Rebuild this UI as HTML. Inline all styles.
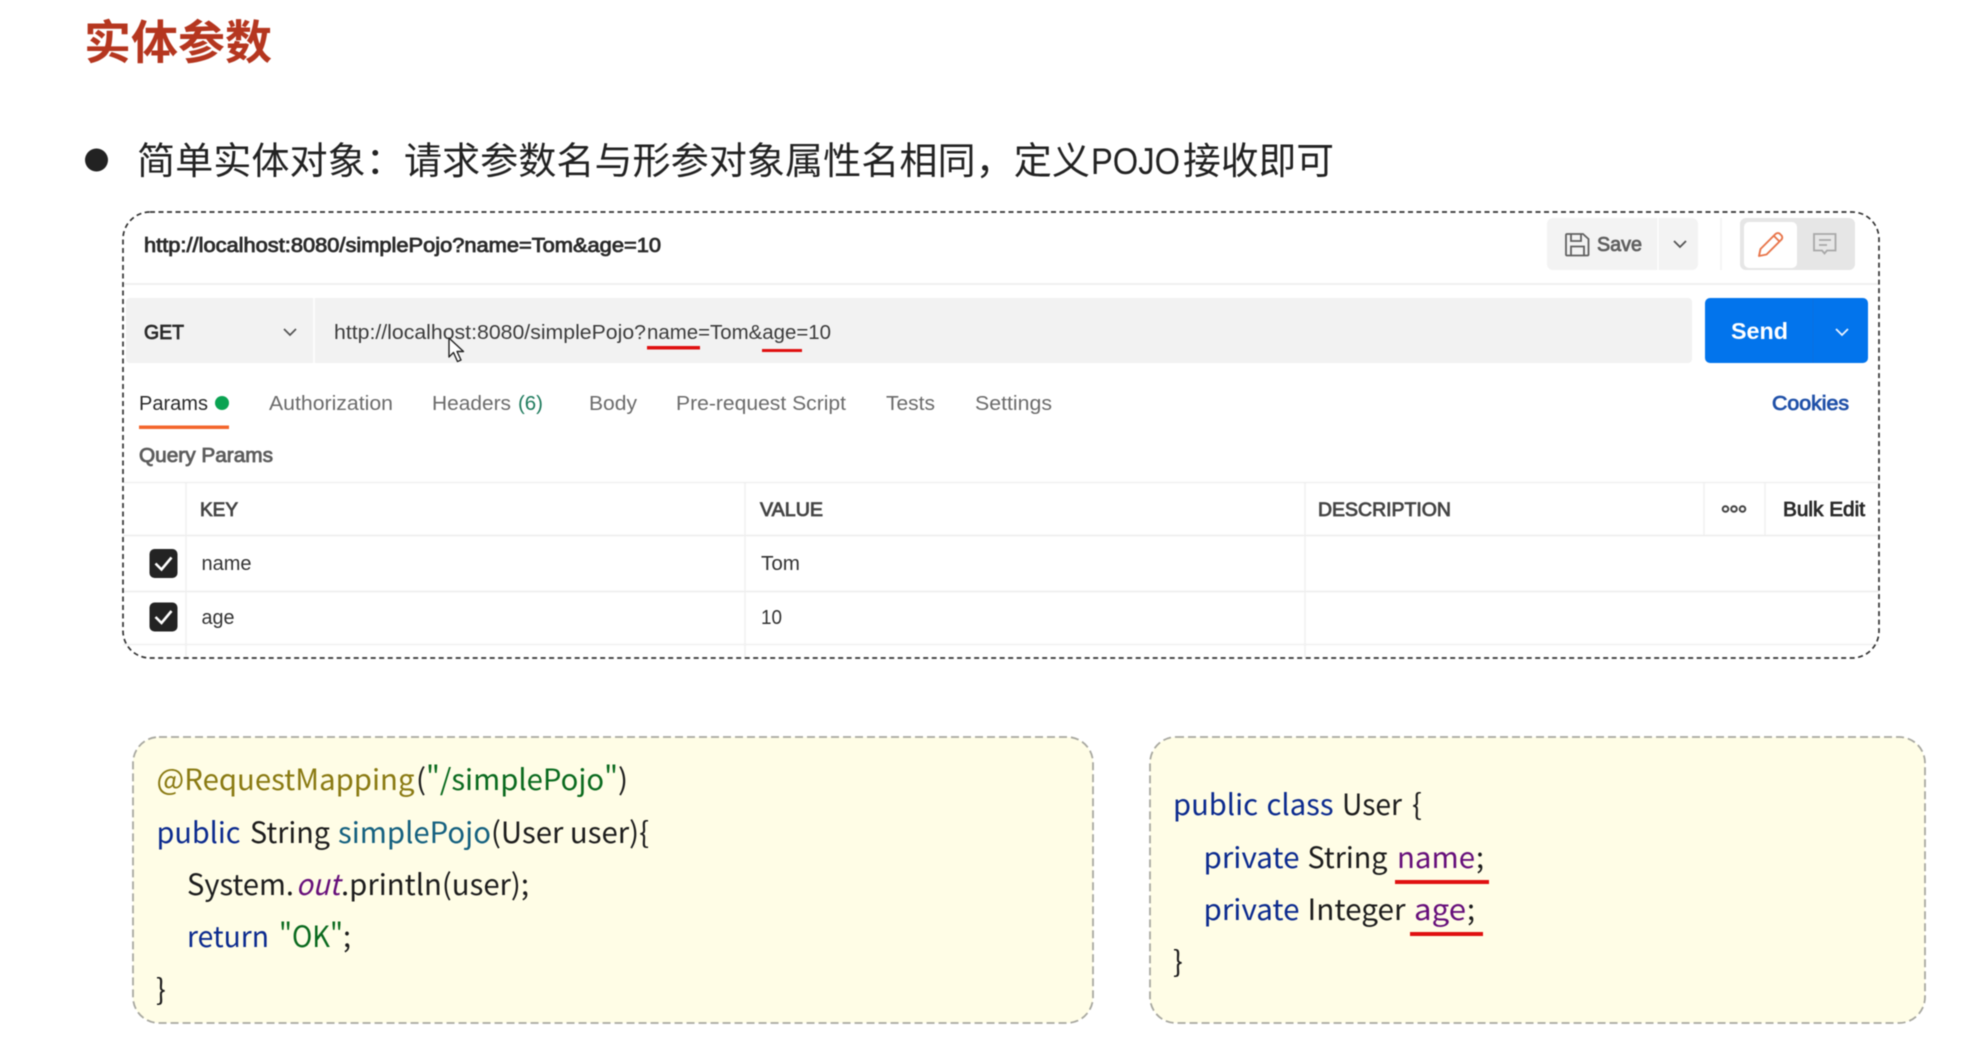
<!DOCTYPE html>
<html lang="zh">
<head>
<meta charset="utf-8">
<title>实体参数</title>
<style>
html,body{margin:0;padding:0;background:#fff;width:1982px;height:1051px;overflow:hidden}
svg{display:block;filter:blur(.55px)}
.ui{font-family:"Liberation Sans",sans-serif;font-size:20px;fill:#6b6b6b}
.dk{fill:#2a2a2a}
.med{stroke-width:.8px;paint-order:stroke}
.hd{fill:#444;stroke:#444;font-size:19px}
.cjk{font-family:"Liberation Sans","Noto Sans CJK SC",sans-serif}
.code{font-family:"Noto Sans CJK SC","Liberation Sans",sans-serif;font-size:29px;fill:#1c1c1c}
.k{fill:#0b2a8e}.p{fill:#660e7a}.g{fill:#0a6a1e}.a{fill:#8a7a12}.m{fill:#14607f}
</style>
</head>
<body>
<svg width="1982" height="1051" viewBox="0 0 1982 1051" xmlns="http://www.w3.org/2000/svg">
<rect width="1982" height="1051" fill="#fff"/>

<!-- heading -->
<text class="cjk" x="84" y="59" font-size="46.5" font-weight="bold" fill="#b5361f" textLength="188" lengthAdjust="spacingAndGlyphs">实体参数</text>
<circle cx="96.500" cy="160" r="11.500" fill="#222"/>
<text class="cjk" x="137" y="174" font-size="37.5" fill="#222" textLength="953" lengthAdjust="spacingAndGlyphs">简单实体对象：请求参数名与形参对象属性名相同，定义</text>
<text class="cjk" x="1091" y="174" font-size="37.5" fill="#222" textLength="89" lengthAdjust="spacingAndGlyphs">POJO</text>
<text class="cjk" x="1183" y="174" font-size="37.5" fill="#222" textLength="151" lengthAdjust="spacingAndGlyphs">接收即可</text>

<!-- postman panel -->
<line x1="123" y1="284" x2="1879" y2="284" stroke="#f0f0f0" stroke-width="2"/>
<text class="ui dk med" stroke="#2a2a2a" x="144" y="252" textLength="517" lengthAdjust="spacingAndGlyphs">http://localhost:8080/simplePojo?name=Tom&amp;age=10</text>

<!-- save -->
<rect x="1547" y="218" width="151" height="52" rx="6" fill="#f3f3f3"/>
<line x1="1658" y1="218" x2="1658" y2="270" stroke="#fff" stroke-width="1.5"/>
<path d="M1567 234h16l5.500 5v15.500q0 1-1 1h-20.500q-1 0-1-1v-19.500q0-1 1-1zM1571 234v7h10v-7M1571 255.500v-9h13v9" fill="none" stroke="#606060" stroke-width="1.800"/>
<text class="ui med" stroke="#5f5f5f" x="1597" y="251" textLength="45" lengthAdjust="spacingAndGlyphs" style="fill:#5f5f5f">Save</text>
<path d="M1674 241l6 6 6-6" fill="none" stroke="#555" stroke-width="1.800"/>
<line x1="1721" y1="218" x2="1721" y2="270" stroke="#f2f2f2" stroke-width="1.500"/>
<rect x="1740" y="218" width="115" height="52" rx="6" fill="#e6e6e6"/>
<rect x="1744" y="222" width="53" height="46" rx="5" fill="#fff"/>
<path d="M1759 256l1.500-7 15-15q2-1.500 4-.5l2 2q1.500 2 0 4l-15 15zM1774 236l6 6" fill="none" stroke="#e8754a" stroke-width="1.900" stroke-linejoin="round"/>
<path d="M1814 234h21.500v16.500h-8.500l-2.500 3-2.500-3h-8zM1819 240h12M1819 245h8" fill="none" stroke="#a8a8a8" stroke-width="1.800"/>

<!-- url bar -->
<rect x="126" y="298" width="1566" height="65" rx="4" fill="#f2f2f2"/>
<line x1="314" y1="298" x2="314" y2="363" stroke="#fff" stroke-width="1.500"/>
<text class="ui dk med" stroke="#2a2a2a" x="144" y="339" textLength="40" lengthAdjust="spacingAndGlyphs">GET</text>
<path d="M284 329l6 6 6-6" fill="none" stroke="#555" stroke-width="1.700"/>
<text class="ui" x="334" y="339" style="fill:#3c3c3c" textLength="312" lengthAdjust="spacingAndGlyphs">http://localhost:8080/simplePojo?</text>
<text class="ui" x="647" y="339" style="fill:#3c3c3c" textLength="184" lengthAdjust="spacingAndGlyphs">name=Tom&amp;age=10</text>
<rect x="647" y="346" width="53" height="3.500" fill="#e01010"/>
<rect x="762" y="349" width="40" height="3" fill="#e01010"/>
<path d="M449 338v19l4.500-4.500 4 9 3.500-1.500-4-8.500h6.500z" fill="#fff" stroke="#222" stroke-width="1.400" stroke-linejoin="round"/>

<!-- send -->
<rect x="1705" y="298" width="163" height="65" rx="5" fill="#0274ec"/>
<line x1="1813" y1="298" x2="1813" y2="363" stroke="#0a6fdf" stroke-width="1"/>
<text class="ui" x="1731" y="339" font-weight="bold" style="fill:#fff;font-size:23px" textLength="57" lengthAdjust="spacingAndGlyphs">Send</text>
<path d="M1836 329l6 6 6-6" fill="none" stroke="#e8f2ff" stroke-width="1.800"/>

<!-- tabs -->
<text class="ui dk" x="139" y="410" textLength="69" lengthAdjust="spacingAndGlyphs">Params</text>
<circle cx="222" cy="403" r="7" fill="#0aa352"/>
<rect x="139" y="425.500" width="90" height="3.500" fill="#f3662c"/>
<text class="ui" x="269" y="410" textLength="124" lengthAdjust="spacingAndGlyphs">Authorization</text>
<text class="ui" x="432" y="410" textLength="79" lengthAdjust="spacingAndGlyphs">Headers</text>
<text class="ui" x="518" y="410" style="fill:#1d7a5c" textLength="25" lengthAdjust="spacingAndGlyphs">(6)</text>
<text class="ui" x="589" y="410" textLength="48" lengthAdjust="spacingAndGlyphs">Body</text>
<text class="ui" x="676" y="410" textLength="170" lengthAdjust="spacingAndGlyphs">Pre-request Script</text>
<text class="ui" x="886" y="410" textLength="49" lengthAdjust="spacingAndGlyphs">Tests</text>
<text class="ui" x="975" y="410" textLength="77" lengthAdjust="spacingAndGlyphs">Settings</text>
<text class="ui med" stroke="#1f50a8" x="1772" y="410" style="fill:#1f50a8" textLength="77" lengthAdjust="spacingAndGlyphs">Cookies</text>
<text class="ui med" stroke="#5c5c5c" x="139" y="462" style="fill:#5c5c5c" textLength="134" lengthAdjust="spacingAndGlyphs">Query Params</text>

<!-- table -->
<g stroke="#f0f0f0" stroke-width="1.500">
<line x1="123" y1="482.500" x2="1879" y2="482.500"/>
<line x1="123" y1="535.500" x2="1879" y2="535.500" stroke="#ededed"/>
<line x1="123" y1="591.500" x2="1879" y2="591.500" stroke="#ededed"/>
<line x1="123" y1="644.500" x2="1879" y2="644.500"/>
<line x1="186" y1="482" x2="186" y2="658"/>
<line x1="745" y1="482" x2="745" y2="658"/>
<line x1="1305" y1="482" x2="1305" y2="658"/>
<line x1="1704" y1="482" x2="1704" y2="535"/>
<line x1="1765" y1="482" x2="1765" y2="535"/>
</g>
<text class="ui hd med" x="200" y="516" textLength="38" lengthAdjust="spacingAndGlyphs">KEY</text>
<text class="ui hd med" x="760" y="516" textLength="63" lengthAdjust="spacingAndGlyphs">VALUE</text>
<text class="ui hd med" x="1318" y="516" textLength="133" lengthAdjust="spacingAndGlyphs">DESCRIPTION</text>
<g fill="none" stroke="#444" stroke-width="2"><circle cx="1725.500" cy="509" r="2.800"/><circle cx="1734" cy="509" r="2.800"/><circle cx="1742.500" cy="509" r="2.800"/></g>
<text class="ui dk med" stroke="#2a2a2a" x="1783" y="516" textLength="82" lengthAdjust="spacingAndGlyphs">Bulk Edit</text>

<rect x="149.500" y="549" width="28" height="29" rx="5" fill="#232323"/>
<path d="M155.500 563.500l6 6 10-12" fill="none" stroke="#fff" stroke-width="2.600"/>
<rect x="149.500" y="602.500" width="28" height="29" rx="5" fill="#232323"/>
<path d="M155.500 617l6 6 10-12" fill="none" stroke="#fff" stroke-width="2.600"/>
<text class="ui" x="201.500" y="570" style="fill:#333" textLength="50" lengthAdjust="spacingAndGlyphs">name</text>
<text class="ui" x="761" y="570" style="fill:#333" textLength="39" lengthAdjust="spacingAndGlyphs">Tom</text>
<text class="ui" x="201.500" y="624" style="fill:#333" textLength="33" lengthAdjust="spacingAndGlyphs">age</text>
<text class="ui" x="761" y="624" style="fill:#333" textLength="21" lengthAdjust="spacingAndGlyphs">10</text>

<rect x="123" y="212" width="1756" height="446" rx="27" fill="none" stroke="#333" stroke-width="1.700" stroke-dasharray="5 3.500"/>

<!-- code box 1 -->
<rect x="133" y="737" width="960" height="286" rx="26" fill="#fffde6" stroke="#a8a8a0" stroke-width="1.800" stroke-dasharray="8 4"/>
<text class="code a" x="156.500" y="790" textLength="258" lengthAdjust="spacingAndGlyphs">@RequestMapping</text>
<text class="code" x="416" y="790" textLength="10" lengthAdjust="spacingAndGlyphs">(</text>
<text class="code g" x="426" y="790" textLength="192" lengthAdjust="spacingAndGlyphs">"/simplePojo"</text>
<text class="code" x="618" y="790" textLength="10" lengthAdjust="spacingAndGlyphs">)</text>

<text class="code k" x="156.500" y="843" textLength="84" lengthAdjust="spacingAndGlyphs">public</text>
<text class="code" x="250" y="843" textLength="80" lengthAdjust="spacingAndGlyphs">String</text>
<text class="code m" x="338" y="843" textLength="153" lengthAdjust="spacingAndGlyphs">simplePojo</text>
<text class="code" x="491" y="843" textLength="158" lengthAdjust="spacingAndGlyphs">(User user){</text>

<text class="code" x="187" y="895" textLength="107" lengthAdjust="spacingAndGlyphs">System.</text>
<text class="code p" x="296" y="895" font-style="italic" textLength="44" lengthAdjust="spacingAndGlyphs">out</text>
<text class="code" x="341" y="895" textLength="188" lengthAdjust="spacingAndGlyphs">.println(user);</text>

<text class="code k" x="187" y="947" textLength="82" lengthAdjust="spacingAndGlyphs">return</text>
<text class="code g" x="279" y="947" textLength="64" lengthAdjust="spacingAndGlyphs">"OK"</text>
<text class="code" x="343" y="947" textLength="8" lengthAdjust="spacingAndGlyphs">;</text>

<text class="code" x="156" y="1000">}</text>

<!-- code box 2 -->
<rect x="1150" y="737" width="775" height="286" rx="26" fill="#fffde6" stroke="#a8a8a0" stroke-width="1.800" stroke-dasharray="8 4"/>
<text class="code k" x="1173" y="815" textLength="85" lengthAdjust="spacingAndGlyphs">public</text>
<text class="code k" x="1266.500" y="815" textLength="67" lengthAdjust="spacingAndGlyphs">class</text>
<text class="code" x="1342" y="815" textLength="60" lengthAdjust="spacingAndGlyphs">User</text>
<text class="code" x="1412" y="815">{</text>

<text class="code k" x="1203.500" y="868" textLength="96" lengthAdjust="spacingAndGlyphs">private</text>
<text class="code" x="1307.500" y="868" textLength="80" lengthAdjust="spacingAndGlyphs">String</text>
<text class="code p" x="1397" y="868" textLength="78" lengthAdjust="spacingAndGlyphs">name</text>
<text class="code" x="1476" y="868" textLength="8" lengthAdjust="spacingAndGlyphs">;</text>
<rect x="1395" y="880" width="94" height="4" fill="#e01010"/>

<text class="code k" x="1203.500" y="920" textLength="96" lengthAdjust="spacingAndGlyphs">private</text>
<text class="code" x="1307.500" y="920" textLength="98" lengthAdjust="spacingAndGlyphs">Integer</text>
<text class="code p" x="1414" y="920" textLength="52" lengthAdjust="spacingAndGlyphs">age</text>
<text class="code" x="1467" y="920" textLength="8" lengthAdjust="spacingAndGlyphs">;</text>
<rect x="1410" y="932" width="73" height="4" fill="#e01010"/>

<text class="code" x="1173" y="972">}</text>
</svg>
</body>
</html>
